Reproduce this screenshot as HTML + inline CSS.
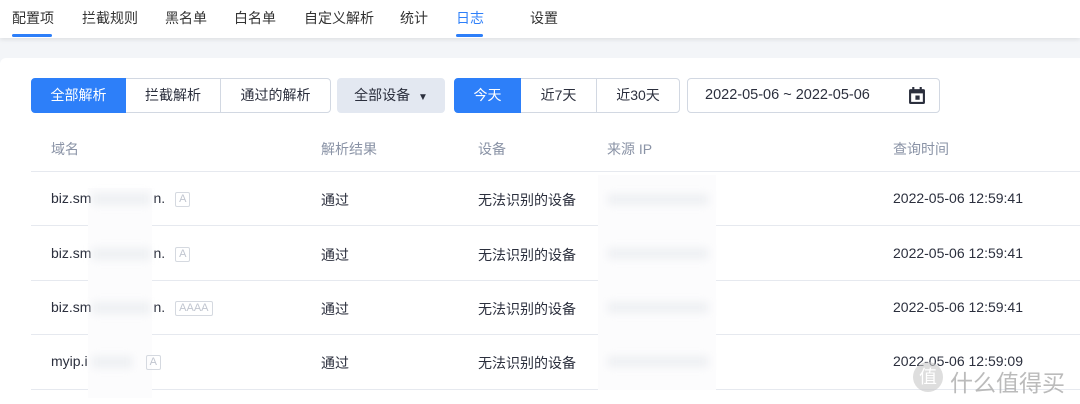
<!DOCTYPE html>
<html><head><meta charset="utf-8"><style>
*{margin:0;padding:0;box-sizing:border-box}
body{width:1080px;height:404px;overflow:hidden;background:#f3f5f8;font-family:"Liberation Sans","Noto Sans CJK SC",sans-serif;color:#2b2f3d;position:relative}
.nav{position:absolute;left:0;top:0;width:1080px;height:38px;background:#fff;box-shadow:0 2px 4px rgba(0,0,0,.08)}
.nav span{position:absolute;top:8px;font-size:14px;color:#333}
.nav span.on{color:#2d7ff9}
.nav i{position:absolute;top:34px;height:3px;background:#2d7ff9;border-radius:2px}
.card{position:absolute;left:0;top:58px;width:1080px;height:346px;background:#fff;border-radius:6px 0 0 0}
.btn{position:absolute;top:78px;height:35px;border:1px solid #d2d8e2;font-size:14px;line-height:33px;text-align:center;color:#2b2f3d;background:#fff}
.blue{background:#2d7ff9;color:#fff;border-color:#2d7ff9}
.th{position:absolute;top:139px;font-size:14px;color:#8a93a6}
.line{position:absolute;left:31px;right:0;height:1px;background:#e6e9ef}
.td{position:absolute;font-size:14px;color:#2b2f3d}
.tag{display:inline-block;border:1px solid #d5d9e0;color:#c0c5cf;font-size:11px;line-height:13px;padding:0 3px;border-radius:2px;vertical-align:middle;margin-left:10px}
.blur{position:absolute;background:#eef0f3;filter:blur(4px)}
.mask{position:absolute;background:#fcfcfd}
</style></head><body>
<div class="nav">
<span style="left:12px">配置项</span><i style="left:12px;width:40px"></i>
<span style="left:82px">拦截规则</span>
<span style="left:165px">黑名单</span>
<span style="left:234px">白名单</span>
<span style="left:304px">自定义解析</span>
<span style="left:400px">统计</span>
<span class="on" style="left:456px">日志</span><i style="left:456px;width:27px"></i>
<span style="left:530px">设置</span>
</div>
<div class="card"></div>
<div class="btn blue" style="left:31px;width:95px;border-radius:4px 0 0 4px">全部解析</div>
<div class="btn" style="left:126px;width:95px;border-left:none">拦截解析</div>
<div class="btn" style="left:220px;width:111px;border-radius:0 4px 4px 0">通过的解析</div>
<div class="btn" style="left:337px;width:108px;background:#e3e8f1;border-color:#e3e8f1;border-radius:4px">全部设备 &nbsp;<span style="font-size:10px">▼</span></div>
<div class="btn blue" style="left:454px;width:67px;border-radius:4px 0 0 4px">今天</div>
<div class="btn" style="left:521px;width:76px;border-left:none">近7天</div>
<div class="btn" style="left:596px;width:84px;border-radius:0 4px 4px 0">近30天</div>
<div class="btn" style="left:687px;width:253px;border-radius:4px;text-align:left;padding-left:17px;font-size:14.5px">2022-05-06 ~ 2022-05-06
<svg style="position:absolute;left:221px;top:8px" width="16" height="17" viewBox="0 0 15 16"><rect x="0" y="2" width="15" height="14" rx="1.5" fill="#2b2f3d"/><rect x="2" y="6" width="11" height="8" fill="#fff"/><rect x="3" y="0" width="2" height="4" fill="#2b2f3d"/><rect x="10" y="0" width="2" height="4" fill="#2b2f3d"/><rect x="6" y="8" width="4" height="4" fill="#2b2f3d"/></svg></div>
<div class="th" style="left:51px">域名</div>
<div class="th" style="left:321px">解析结果</div>
<div class="th" style="left:478px">设备</div>
<div class="th" style="left:607px">来源 IP</div>
<div class="th" style="left:893px">查询时间</div>
<div class="line" style="top:171px"></div>
<div class="line" style="top:225px"></div>
<div class="line" style="top:280px"></div>
<div class="line" style="top:334px"></div>
<div class="line" style="top:389px"></div>
<div class="mask" style="left:88px;top:188px;width:64px;height:210px"></div>
<div class="mask" style="left:598px;top:175px;width:118px;height:215px"></div>

<div class="td" style="left:51px;top:190px">biz.sm<span style="display:inline-block;width:62px"></span>n.<span class="tag">A</span></div>
<div class="td" style="left:51px;top:245px">biz.sm<span style="display:inline-block;width:62px"></span>n.<span class="tag">A</span></div>
<div class="td" style="left:51px;top:299px">biz.sm<span style="display:inline-block;width:62px"></span>n.<span class="tag">AAAA</span></div>
<div class="td" style="left:51px;top:353px">myip.i<span style="display:inline-block;width:58px"></span><span class="tag" style="margin-left:0">A</span></div>
<div class="blur" style="left:92px;top:193px;width:58px;height:12px"></div>
<div class="blur" style="left:92px;top:248px;width:58px;height:12px"></div>
<div class="blur" style="left:92px;top:302px;width:58px;height:12px"></div>
<div class="blur" style="left:92px;top:356px;width:40px;height:12px"></div>
<div class="blur" style="left:608px;top:194px;width:100px;height:11px"></div>
<div class="blur" style="left:608px;top:248px;width:100px;height:11px"></div>
<div class="blur" style="left:608px;top:302px;width:100px;height:11px"></div>
<div class="blur" style="left:608px;top:356px;width:100px;height:11px"></div>

<div class="td" style="left:321px;top:190px">通过</div>
<div class="td" style="left:321px;top:245px">通过</div>
<div class="td" style="left:321px;top:299px">通过</div>
<div class="td" style="left:321px;top:353px">通过</div>
<div class="td" style="left:478px;top:190px">无法识别的设备</div>
<div class="td" style="left:478px;top:245px">无法识别的设备</div>
<div class="td" style="left:478px;top:299px">无法识别的设备</div>
<div class="td" style="left:478px;top:353px">无法识别的设备</div>
<div class="td" style="left:893px;top:190px">2022-05-06 12:59:41</div>
<div class="td" style="left:893px;top:245px">2022-05-06 12:59:41</div>
<div class="td" style="left:893px;top:299px">2022-05-06 12:59:41</div>
<div class="td" style="left:893px;top:353px">2022-05-06 12:59:09</div>
<div style="position:absolute;left:913px;top:362px;width:30px;height:30px;border-radius:50%;background:rgba(200,200,200,.6);color:#fff;font-size:18px;line-height:30px;text-align:center">值</div>
<div style="position:absolute;left:950px;top:364px;font-size:23px;color:rgba(170,170,170,.8)">什么值得买</div>
</body></html>
